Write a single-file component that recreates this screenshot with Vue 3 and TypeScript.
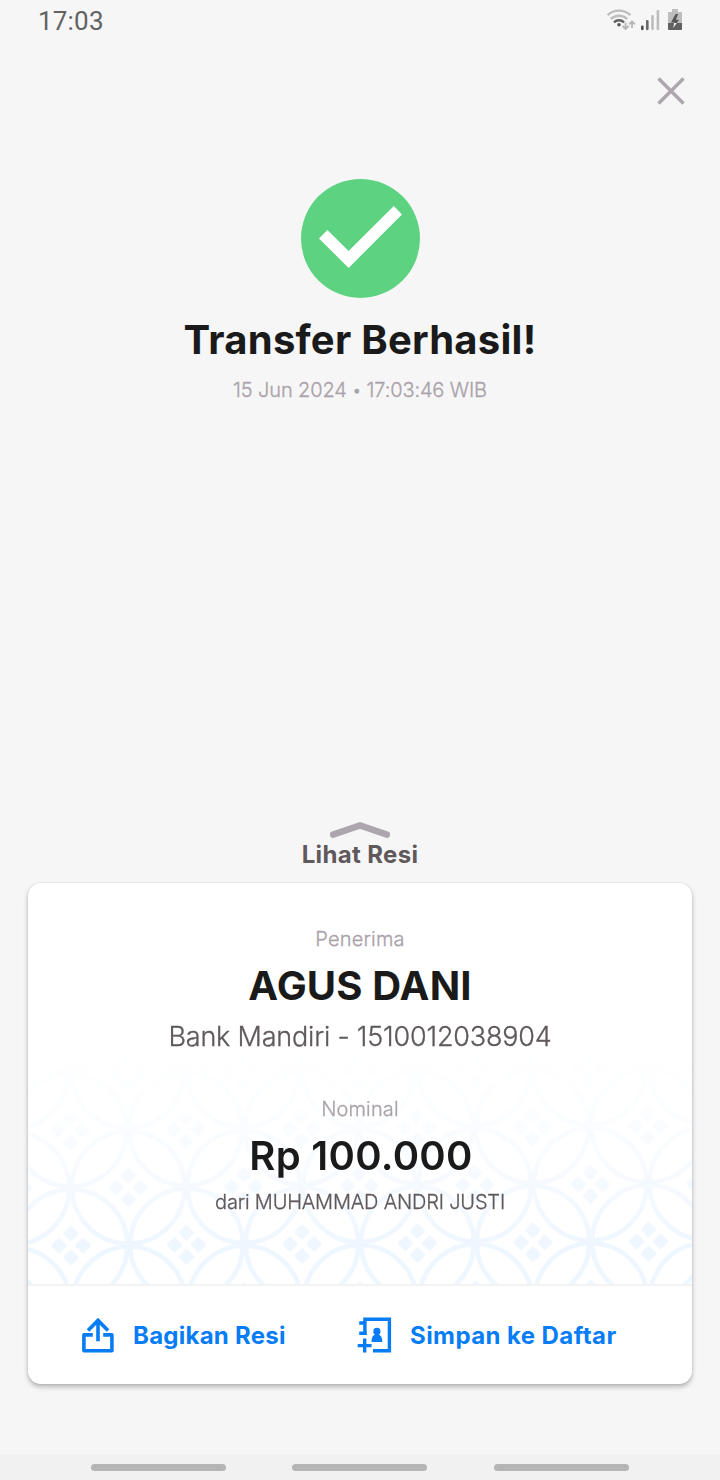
<script setup lang="ts">
interface Point {
  x: number
  y: number
}

// Batik "kawung" lattice: overlapping circles on a staggered grid.
const STEP = 57.75
const lattice: Point[] = []
for (let row = -1; row < 5; row++) {
  for (let col = -1; col < 13; col++) {
    if ((row + col) % 2 === 0) {
      lattice.push({ x: 43 + col * STEP, y: 190 - row * STEP })
    }
  }
}

const petals: Point[] = [
  { x: 0, y: -12 },
  { x: 12, y: 0 },
  { x: 0, y: 12 },
  { x: -12, y: 0 },
]
</script>

<template>
  <main class="screen">
    <header class="status">
      <span class="clock">17:03</span>
      <svg class="indicators" width="80" height="28" viewBox="604 6 80 28">
        <g fill="none" stroke-linecap="butt">
          <path d="M607.6 15.2A16.6 16.6 0 0 1 630.4 15.2" stroke="#bdbdbd" stroke-width="2.3" />
          <path d="M610.8 19A12 12 0 0 1 627.2 19" stroke="#bdbdbd" stroke-width="2.3" />
          <path d="M614 22.3A7 7 0 0 1 624 22.3" stroke="#616161" stroke-width="2.4" />
        </g>
        <circle cx="619" cy="24.7" r="1.8" fill="#555" />
        <g fill="none" stroke="#b5b5b5" stroke-width="1.8">
          <path d="M625.6 22.5V28.6M622.6 26L625.6 29L628.6 26" />
          <path d="M632 28V21.6M629 24.4L632 21.4L635 24.4" />
        </g>
        <rect x="641" y="25.4" width="2.6" height="4.8" rx="1.1" fill="#4f4f4f" />
        <rect x="646" y="20" width="2.6" height="10.2" rx="1.1" fill="#6a6a6a" />
        <rect x="651.2" y="15" width="2.6" height="15.2" rx="1.1" fill="#bdbdbd" />
        <rect x="656.6" y="10" width="2.6" height="20.2" rx="1.1" fill="#bdbdbd" />
        <path d="M672 9H678V12H681Q682 12 682 13V23H668V13Q668 12 669 12H672Z" fill="#bdbdbd" />
        <path d="M668 23H682V29Q682 30 681 30H669Q668 30 668 29Z" fill="#616161" />
        <path d="M675.6 14L671 22.6H674.4L673.2 28L679 19.8H675.8L678.2 14Z" fill="#555" />
        <path d="M674.2 23H676.7L673.2 28Z" fill="#fff" />
      </svg>
    </header>

    <div class="toolbar">
      <button class="close" type="button" aria-label="Tutup">
        <svg width="30" height="30" viewBox="0 0 30 30">
          <path d="M2.5 2.5L27.5 27.5M27.5 2.5L2.5 27.5" stroke="#aea6ae" stroke-width="3.4" />
        </svg>
      </button>
    </div>

    <section class="result">
      <svg width="120" height="120" viewBox="300 178 120 120">
        <circle cx="360.5" cy="238.4" r="59.5" fill="#5dd281" />
        <path d="M319 238.4L327.4 230L348.6 251L393.8 206L402 214.4L348.6 268Z" fill="#fff" />
      </svg>
      <h1 class="title">Transfer Berhasil!</h1>
      <p class="date">15 Jun 2024 <span class="dot">•</span> 17:03:46 WIB</p>
    </section>

    <div class="reveal">
      <svg width="60" height="18" viewBox="330 821 60 18">
        <path
          d="M333 834.6L360 825.4L387 834.6"
          fill="none"
          stroke="#aea6ae"
          stroke-width="6.4"
          stroke-linecap="round"
          stroke-linejoin="miter"
        />
      </svg>
      <span class="reveal-label">Lihat Resi</span>
    </div>

    <article class="card">
      <div class="details">
        <svg class="batik" width="664" height="240" viewBox="0 -7 664 240">
          <defs>
            <linearGradient id="fade" x1="0" y1="0" x2="0" y2="1">
              <stop offset="0.02" stop-color="#fff" stop-opacity="0" />
              <stop offset="0.5" stop-color="#fff" stop-opacity="0.45" />
              <stop offset="0.85" stop-color="#fff" stop-opacity="1" />
            </linearGradient>
            <mask id="fadeMask" maskUnits="userSpaceOnUse" x="0" y="-7" width="664" height="240">
              <rect x="0" y="-7" width="664" height="240" fill="url(#fade)" />
            </mask>
          </defs>
          <g mask="url(#fadeMask)">
            <g transform="translate(0 4.5) rotate(-0.4 43 190)">
              <g v-for="(p, i) in lattice" :key="i" :transform="`translate(${p.x} ${p.y})`">
                <circle r="56.3" fill="none" stroke="#eef6ff" stroke-width="4.6" />
                <rect
                  v-for="(q, j) in petals"
                  :key="j"
                  x="-5.8"
                  y="-5.8"
                  width="11.6"
                  height="11.6"
                  rx="1.6"
                  fill="#eef6ff"
                  :transform="`translate(${q.x} ${q.y}) rotate(45)`"
                />
              </g>
            </g>
          </g>
        </svg>
        <p class="label">Penerima</p>
        <h2 class="value name">AGUS DANI</h2>
        <p class="account">Bank Mandiri - 1510012038904</p>
        <p class="label nominal">Nominal</p>
        <h2 class="value amount">Rp 100.000</h2>
        <p class="sender">dari MUHAMMAD ANDRI JUSTI</p>
      </div>

      <footer class="actions">
        <button class="action share" type="button">
          <svg width="34" height="38" viewBox="81 1316 34 38">
            <g fill="none" stroke="#077df5" stroke-width="3.6">
              <path d="M92.8 1334.9H83.9V1350.7H111.9V1334.9H103.2" stroke-linejoin="round" />
              <path d="M98 1341.2V1321M88 1330.4L98 1320.4L108 1330.4" />
            </g>
          </svg>
          <span class="action-text">Bagikan Resi</span>
        </button>
        <button class="action save" type="button">
          <svg width="36" height="38" viewBox="357 1316 36 38">
            <g fill="none" stroke="#077df5" stroke-width="3.4">
              <path d="M364.9 1334.9V1319.2H389.4V1350.7H373" />
              <path d="M359.2 1323H364.9M359.2 1333.3H366.6" />
              <path d="M357.7 1345.6H371.6M364.7 1338.4V1352.6" />
            </g>
            <circle cx="376.9" cy="1331.4" r="3.6" fill="#077df5" />
            <path d="M371.6 1342V1340.2Q371.8 1335.6 375.4 1334.4H378.4Q382 1335.6 382.2 1340.2V1342Z" fill="#077df5" />
          </svg>
          <span class="action-text">Simpan ke Daftar</span>
        </button>
      </footer>
    </article>

    <nav class="navbar">
      <span class="pill"></span>
      <span class="pill"></span>
      <span class="pill"></span>
    </nav>
  </main>
</template>

<style>
body {
  margin: 0;
  background: #f6f6f6;
}
</style>

<style scoped>
.screen {
  display: flex;
  flex-direction: column;
  width: 720px;
  height: 1480px;
  overflow: hidden;
  background: #f6f6f6;
  font-family: Inter, 'Liberation Sans', sans-serif;
  color: #1a1a1a;
}

h1,
h2,
p {
  margin: 0;
}

svg {
  display: block;
  flex: none;
}

button {
  padding: 0;
  border: 0;
  background: none;
  font: inherit;
}

.status {
  display: flex;
  justify-content: space-between;
  box-sizing: border-box;
  height: 42px;
  padding: 6px 36px 0 38px;
}

.clock {
  font: 400 26px/30px Roboto, sans-serif;
  letter-spacing: 0.2px;
  color: #626262;
}

.toolbar {
  display: flex;
  justify-content: flex-end;
  height: 136px;
  padding: 34px 34px 0 0;
  box-sizing: border-box;
}

.close {
  width: 30px;
  height: 30px;
}

.result {
  display: flex;
  flex-direction: column;
  align-items: center;
  height: 643px;
}

.title {
  margin-top: 17px;
  font-size: 40px;
  line-height: 50px;
  font-weight: 700;
  letter-spacing: 0.25px;
}

.date,
.label,
.account,
.sender {
  font-weight: 300;
  -webkit-text-stroke: 0.3px currentColor;
}

.date {
  margin-top: 12px;
  font-size: 20px;
  line-height: 26px;
  letter-spacing: -0.13px;
  color: #aaa3aa;
}

.dot {
  font-size: 16px;
  line-height: 20px;
  vertical-align: 1px;
}

.reveal {
  display: flex;
  flex-direction: column;
  align-items: center;
  height: 62px;
}

.reveal-label {
  margin-top: 1px;
  font-size: 24px;
  line-height: 30px;
  font-weight: 700;
  letter-spacing: 0.35px;
  color: #5f595b;
}

.card {
  display: flex;
  flex-direction: column;
  height: 501px;
  margin: 0 28px;
  border-radius: 13px;
  background: #fff;
  box-shadow: 0 3px 5px rgba(0, 0, 0, 0.26), 0 0 2px rgba(0, 0, 0, 0.12);
}

.details {
  position: relative;
  display: flex;
  flex-direction: column;
  align-items: center;
  box-sizing: border-box;
  height: 403px;
  padding-top: 43px;
  border-bottom: 2px solid #f3f3f4;
}

.batik {
  position: absolute;
  left: 0;
  bottom: 0;
}

.label,
.value,
.account,
.sender {
  position: relative;
}

.label {
  font-size: 20px;
  line-height: 26px;
  letter-spacing: 0.2px;
  color: #aaa3aa;
}

.value {
  font-size: 40px;
  line-height: 50px;
}

.name {
  margin-top: 9px;
  font-weight: 700;
  letter-spacing: 0.16px;
}

.account {
  margin-top: 9px;
  font-size: 27px;
  line-height: 34px;
  letter-spacing: -0.2px;
  color: #5f595b;
}

.nominal {
  margin-top: 42px;
  letter-spacing: 0.15px;
}

.amount {
  margin-top: 9px;
  padding-left: 2px;
  font-weight: 600;
  letter-spacing: 0.3px;
}

.sender {
  margin-top: 8px;
  font-size: 20px;
  line-height: 26px;
  letter-spacing: -0.18px;
  color: #5f595b;
}

.actions {
  display: flex;
  align-items: center;
  height: 98px;
  padding-left: 53px;
}

.action {
  display: flex;
  align-items: center;
  color: #077df5;
  font-size: 24px;
  line-height: 30px;
  font-weight: 700;
  white-space: nowrap;
}

.action-text {
  padding-top: 2px;
}

.share {
  gap: 18px;
  width: 276px;
  letter-spacing: 0.25px;
}

.save {
  gap: 17px;
  letter-spacing: 0.42px;
}

.navbar {
  display: flex;
  gap: 66.4px;
  box-sizing: border-box;
  height: 26px;
  margin-top: auto;
  padding: 9.5px 0 0 91px;
  background: #f1f1f1;
}

.pill {
  width: 135px;
  height: 7px;
  border-radius: 4px;
  background: #b5b5b5;
}
</style>
